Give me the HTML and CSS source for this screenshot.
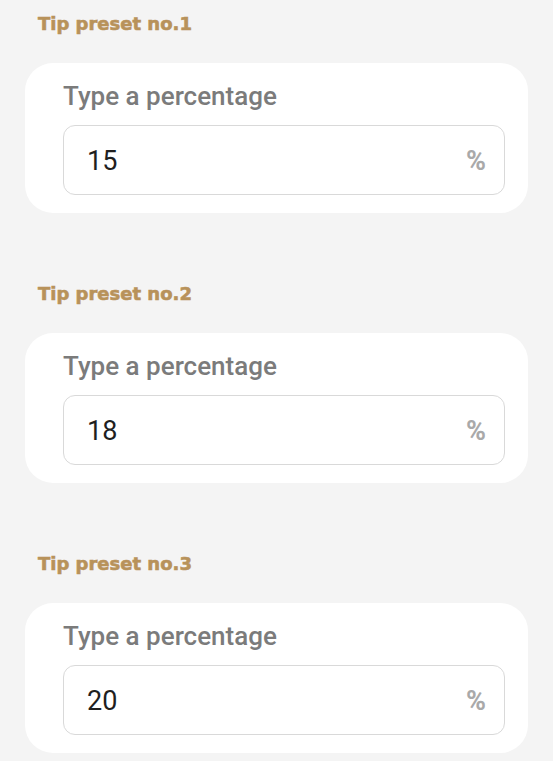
FILE: index.html
```html
<!DOCTYPE html>
<html lang="en">

<head>
    <meta charset="UTF-8">
    <meta name="viewport" content="width=device-width, initial-scale=1.0">
    <title>Tip presets</title>
    <link rel="stylesheet" href="styles.css">
</head>

<body>
    <div class="preset">
        <h2 class="preset-title">Tip preset no.1</h2>
        <div class="card">
            <label class="field-label" for="tip1">Type a percentage</label>
            <div class="field">
                <input class="field-input" id="tip1" type="text" value="15">
                <span class="field-unit">%</span>
            </div>
        </div>
    </div>

    <div class="preset">
        <h2 class="preset-title">Tip preset no.2</h2>
        <div class="card">
            <label class="field-label" for="tip2">Type a percentage</label>
            <div class="field">
                <input class="field-input" id="tip2" type="text" value="18">
                <span class="field-unit">%</span>
            </div>
        </div>
    </div>

    <div class="preset">
        <h2 class="preset-title">Tip preset no.3</h2>
        <div class="card">
            <label class="field-label" for="tip3">Type a percentage</label>
            <div class="field">
                <input class="field-input" id="tip3" type="text" value="20">
                <span class="field-unit">%</span>
            </div>
        </div>
    </div>
</body>

</html>
```

FILE: styles.css
```css
body {
    margin: 0;
    padding: 0 25px;
    background: #f4f4f4;
    font-family: Roboto, 'Liberation Sans', sans-serif;
}

.preset {
    margin-bottom: 69px;
}

.preset:first-child {
    padding-top: 12px;
}

.preset-title {
    margin: 0 0 27px 13px;
    font-family: 'DejaVu Sans', sans-serif;
    font-weight: 700;
    font-size: 18px;
    line-height: 24px;
    color: #b8925a;
    -webkit-text-stroke: 0.6px #b8925a;
}

.card {
    background: #fff;
    border-radius: 28px;
    padding: 18px 23px 18px 38px;
}

.field-label {
    display: block;
    margin-bottom: 14px;
    font-size: 26px;
    line-height: 30px;
    font-weight: 500;
    color: #7b7b7b;
}

.field {
    display: flex;
    align-items: center;
    height: 70px;
    box-sizing: border-box;
    border: 1px solid #d9d9d9;
    border-radius: 12px;
    padding: 2px 18px 0 23px;
}

.field-input {
    flex: 1;
    min-width: 0;
    border: none;
    outline: none;
    background: transparent;
    padding: 0;
    font-family: Roboto, 'Liberation Sans', sans-serif;
    font-size: 27px;
    color: #1f1f1f;
}

.field-unit {
    font-size: 27px;
    font-weight: 700;
    color: #a9a9a9;
}
```
